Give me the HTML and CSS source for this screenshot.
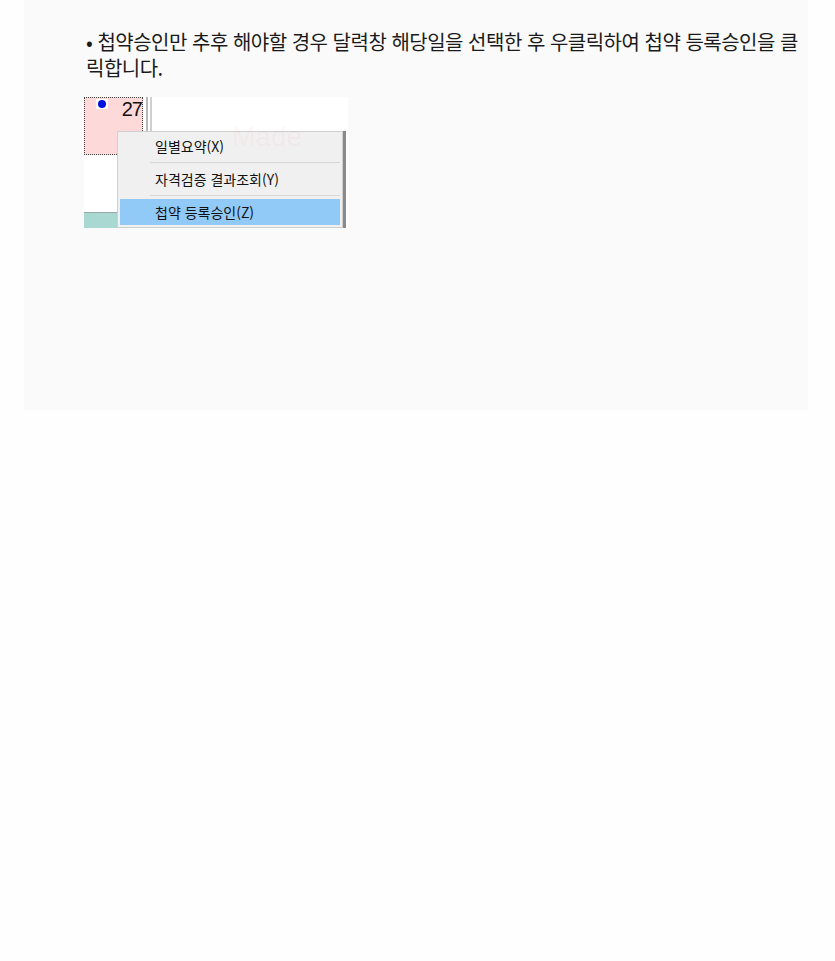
FILE: index.html
```html
<!DOCTYPE html>
<html lang="ko">

<head>
    <meta charset="UTF-8">
    <title>첩약 등록승인</title>
    <link rel="stylesheet" href="styles.css">
</head>

<body>

    <div class="sheet">
        <p class="note">• 첩약승인만 추후 해야할 경우 달력창 해당일을 선택한 후 우클릭하여 첩약 등록승인을 클릭합니다.</p>

        <div class="capture">
            <div class="day-cell">
                <span class="dot-box"><span class="dot"></span></span>
                <span class="day-num">27</span>
            </div>
            <div class="grid-line one"></div>
            <div class="grid-line two"></div>
            <div class="strip"></div>

            <ul class="menu">
                <li class="menu-item">일별요약(X)</li>
                <li class="sep"></li>
                <li class="menu-item">자격검증 결과조회(Y)</li>
                <li class="sep"></li>
                <li class="menu-item active">첩약 등록승인(Z)</li>
            </ul>

            <div class="watermark">Made</div>
        </div>
    </div>

</body>

</html>
```

FILE: styles.css
```css
body {
    margin: 0;
    background-color: #fefefe;
    font-family: "Noto Sans CJK KR", "Noto Sans", sans-serif;
    color: #222;
}

.sheet {
    margin: 0 27px 0 24px;
    height: 410px;
    padding: 29px 0 0 62px;
    box-sizing: border-box;
    background-color: #fafafa;
}

.note {
    margin: 0;
    width: 718px;
    font-size: 20px;
    line-height: 26px;
    letter-spacing: -0.5px;
    color: #1a1a1a;
}

.capture {
    position: relative;
    margin: 16px 0 0 -2px;
    width: 264px;
    height: 131px;
    background: #fff;
    overflow: hidden;
}

.day-cell {
    position: absolute;
    left: 0;
    top: 0;
    width: 57px;
    height: 56px;
    background: #fdd9d9;
    border: 1px dotted #444;
}

.dot-box {
    position: absolute;
    left: 11px;
    top: 1px;
    width: 12px;
    height: 10px;
    background: #fff;
}

.dot {
    position: absolute;
    left: 2px;
    top: 1px;
    width: 8px;
    height: 8px;
    border-radius: 50%;
    background: #0010e0;
}

.day-num {
    position: absolute;
    right: 0;
    top: 1px;
    font-family: "Liberation Sans", Arial, sans-serif;
    font-size: 20px;
    line-height: 20px;
    letter-spacing: -1px;
    color: #111;
}

.grid-line {
    position: absolute;
    top: 0;
    width: 2px;
    height: 114px;
    background: #b8b8b8;
}

.grid-line.one {
    left: 62px;
}

.grid-line.two {
    left: 66px;
    background: #cfcfcf;
}

.strip {
    position: absolute;
    left: 0;
    bottom: 0;
    width: 34px;
    height: 15px;
    background: #a9d8d3;
    border-top: 1px solid #9aa8ab;
}

.menu {
    position: absolute;
    left: 33px;
    top: 34px;
    width: 226px;
    height: 97px;
    margin: 0;
    padding: 1px 2px 0 2px;
    box-sizing: border-box;
    list-style: none;
    background: #f0f0f0;
    border: 1px solid #cfcfcf;
    box-shadow: 3px 0 0 #8a8a8a;
}

.menu-item {
    height: 26px;
    padding-left: 35px;
    font-size: 14px;
    line-height: 26px;
    color: #111;
}

.menu-item.active {
    background: #91c9f7;
}

.sep {
    height: 1px;
    margin: 3px 0 3px 30px;
    background: #d7d7d7;
}

.watermark {
    position: absolute;
    left: 148px;
    top: 24px;
    font-family: "Liberation Sans", Arial, sans-serif;
    font-size: 28px;
    line-height: 32px;
    color: rgba(240, 140, 140, 0.07);
    pointer-events: none;
}
```
